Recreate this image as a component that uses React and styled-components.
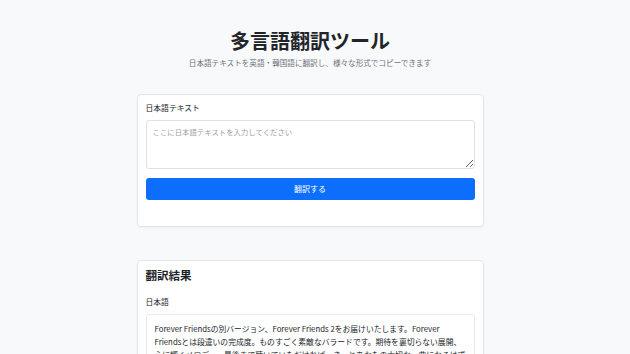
import styled, { createGlobalStyle } from "styled-components";

const GlobalStyle = createGlobalStyle`
  body {
    margin: 0;
    padding-right: 10px;
    background: #f8f9fa;
    color: #212529;
    font-family: "Noto Sans CJK JP", "Noto Sans", sans-serif;
  }
  ::-webkit-scrollbar {
    width: 10px;
  }
  ::-webkit-scrollbar-track {
    background: #f1f1f1;
  }
  ::-webkit-scrollbar-thumb {
    background: #c1c1c1;
  }
`;

const Page = styled.div`
  width: 347px;
  margin: 0 auto;
  padding: 28px 0 40px;
`;

const Title = styled.h1`
  margin: 0 0 4px;
  font-size: 20px;
  line-height: 25px;
  font-weight: 700;
  text-align: center;
`;

const Subtitle = styled.p`
  margin: 0 0 24px;
  font-size: 7.6px;
  line-height: 12.75px;
  color: #6c757d;
  text-align: center;
`;

const Card = styled.div`
  box-sizing: border-box;
  background: #fff;
  border: 1px solid #e3e6e9;
  border-radius: 4px;
  box-shadow: 0 1px 2px rgba(0, 0, 0, 0.04);
  padding: ${(p) => p.$pad || "8px"};
  margin-bottom: 33px;
`;

const Label = styled.div`
  font-size: 7.8px;
  line-height: 12.75px;
  margin-bottom: ${(p) => p.$mb || "5px"};
`;

const TextArea = styled.textarea`
  display: block;
  box-sizing: border-box;
  width: 100%;
  height: 49px;
  border: 1px solid #dee2e6;
  border-radius: 3px;
  padding: 5px 6px;
  font-family: inherit;
  font-size: 7.4px;
  line-height: 12.75px;
  resize: vertical;
  &::placeholder {
    color: #9a9fa4;
  }
`;

const Button = styled.button`
  display: block;
  width: 100%;
  height: 22px;
  margin: 9px 0 18px;
  border: none;
  border-radius: 3px;
  background: ${(p) => p.$bg || "#0d6efd"};
  color: #fff;
  font-family: inherit;
  font-size: 8px;
`;

const Heading = styled.h2`
  margin: 0 0 14px;
  font-size: 11.5px;
  line-height: 13.2px;
  font-weight: 700;
`;

const ResultBox = styled.div`
  border: 1px solid #e9ecef;
  border-radius: 3px;
  padding: 8px;
  font-size: 7.8px;
  line-height: 12.75px;
  margin-bottom: 14px;
  font-family: ${(p) =>
    p.$kr ? `"Noto Sans CJK KR", sans-serif` : "inherit"};
`;

const CopyRow = styled.div`
  display: flex;
  gap: 5px;
  margin-bottom: 16px;
`;

const SmallButton = styled.button`
  border: 1px solid #6c757d;
  background: #fff;
  color: #6c757d;
  border-radius: 3px;
  font-family: inherit;
  font-size: 7.5px;
  padding: 3px 7px;
`;

const results = [
  {
    label: "日本語",
    text:
      "Forever Friendsの別バージョン、Forever Friends 2をお届けいたします。Forever Friendsとは段違いの完成度。ものすごく素敵なバラードです。期待を裏切らない展開、心に響くメロディ、最後まで聴いていただければ、きっとあなたの大切な一曲になるはずです。",
  },
  {
    label: "英語",
    text:
      "We are pleased to present Forever Friends 2, another version of Forever Friends. Its level of completion is far beyond Forever Friends. It is a truly wonderful ballad. With a development that will not betray your expectations and a melody that touches the heart, if you listen to the end, it will surely become a precious song for you.",
  },
  {
    label: "韓国語",
    kr: true,
    text:
      "Forever Friends의 다른 버전, Forever Friends 2를 전해 드립니다. Forever Friends와는 차원이 다른 완성도. 정말 멋진 발라드입니다. 기대를 저버리지 않는 전개, 마음에 울리는 멜로디, 끝까지 들어 주신다면 분명 당신의 소중한 한 곡이 될 것입니다.",
  },
];

const App = () => {
  return (
    <>
      <GlobalStyle />
      <Page>
        <Title>多言語翻訳ツール</Title>
        <Subtitle>日本語テキストを英語・韓国語に翻訳し、様々な形式でコピーできます</Subtitle>

        <Card $pad="7px 8px 8px">
          <Label>日本語テキスト</Label>
          <TextArea placeholder="ここに日本語テキストを入力してください" />
          <Button>翻訳する</Button>
        </Card>

        <Card>
          <Heading>翻訳結果</Heading>
          {results.map((r) => (
            <div key={r.label}>
              <Label $mb="6px">{r.label}</Label>
              <ResultBox $kr={r.kr}>{r.text}</ResultBox>
            </div>
          ))}
          <Label $mb="6px">コピー形式</Label>
          <CopyRow>
            <SmallButton>テキスト</SmallButton>
            <SmallButton>Markdown</SmallButton>
            <SmallButton>HTML</SmallButton>
            <SmallButton>JSON</SmallButton>
          </CopyRow>
        </Card>
      </Page>
    </>
  );
};

export default App;
